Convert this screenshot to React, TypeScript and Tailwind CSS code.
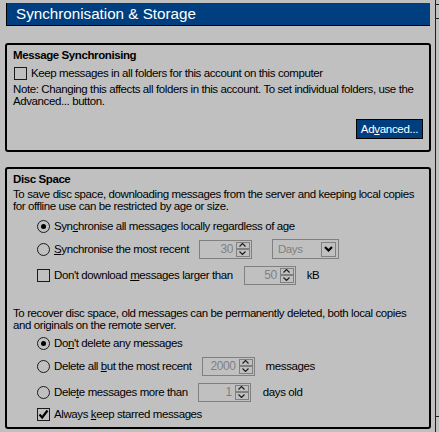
import React from 'react'

const font = { fontFamily: '"Liberation Sans", Arial, sans-serif' }

function Radio({ checked }: { checked?: boolean }) {
  return (
    <span className="w-[13px] h-[13px] rounded-full border border-[#1a1a1a] bg-[#c0c0c0] flex items-center justify-center shrink-0">
      {checked && <span className="w-[5px] h-[5px] rounded-full bg-black" />}
    </span>
  )
}

function Check({ checked }: { checked?: boolean }) {
  return (
    <span className="w-[13px] h-[13px] border border-[#1a1a1a] flex items-center justify-center shrink-0">
      {checked && (
        <svg width="11" height="11" viewBox="0 0 11 11">
          <path d="M1.5 5.5 L4.2 8.5 L9.5 1.5" stroke="black" strokeWidth="2.2" fill="none" />
        </svg>
      )}
    </span>
  )
}

function SpinArrow({ up }: { up?: boolean }) {
  return (
    <span className="flex-1 border border-[#808080] flex items-center justify-center">
      <svg width="7" height="4" viewBox="0 0 7 4">
        <path d={up ? 'M0.5 3.5 L3.5 0.5 L6.5 3.5' : 'M0.5 0.5 L3.5 3.5 L6.5 0.5'} stroke="#202020" strokeWidth="1.2" fill="none" />
      </svg>
    </span>
  )
}

function Spin({ value, className }: { value: string; className: string }) {
  return (
    <div className={`flex items-stretch h-[19px] border border-[#808080] p-[1px] shrink-0 ${className}`}>
      <span className="flex-1 flex items-center justify-end pr-[3px] text-[#808080] text-[12px]">{value}</span>
      <div className="w-[14px] flex flex-col">
        <SpinArrow up />
        <SpinArrow />
      </div>
    </div>
  )
}

function GroupBox({ title, className, children }: { title: string; className: string; children: React.ReactNode }) {
  return (
    <div className={`w-[426px] border-2 border-black rounded-[3px] px-[6px] pt-[4px] ${className}`}>
      <div className="text-[11.5px] font-bold leading-[12px] text-black">{title}</div>
      {children}
    </div>
  )
}

export default function App() {
  return (
    <div style={font} className="w-[439px] h-[432px] bg-[#c0c0c0] overflow-hidden flex text-black text-[11.5px] tracking-[-0.4px] leading-[12px]">
      <div className="w-[431px] pl-[5px] flex flex-col">
        <div className="ml-[1px] mt-[3px] w-[424px] h-[23px] bg-[#003f7f] border-l border-b border-black flex items-center px-[9px]">
          <span className="text-white text-[15.2px] tracking-[0px] leading-none">Synchronisation &amp; Storage</span>
        </div>

        <GroupBox title="Message Synchronising" className="mt-[17px] h-[109px]">
          <div className="flex items-center gap-[4px] mt-[6px] ml-[1px] h-[12px]">
            <Check />
            <span>Keep messages in all folders for this account on this computer</span>
          </div>
          <p className="mt-[4px] pr-[4px]">
            Note: Changing this affects all folders in this account. To set individual folders, use the Advanced... button.
          </p>
          <div className="flex justify-end mt-[12px]">
            <button className="w-[67px] h-[20px] bg-[#003f7f] border border-black text-white text-[11.5px] tracking-[-0.3px] flex items-center justify-center">
              Ad<u>v</u>anced...
            </button>
          </div>
        </GroupBox>

        <GroupBox title="Disc Space" className="mt-[15px] h-[262px]">
          <p className="mt-[3px] pr-[4px]">
            To save disc space, downloading messages from the server and keeping local copies for offline use can be restricted by age or size.
          </p>
          <div className="pl-[24px] mt-[8px] flex flex-col">
            <div className="flex items-center gap-[4px] h-[12px]">
              <Radio checked />
              <span>Syn<u>c</u>hronise all messages locally regardless of age</span>
            </div>
            <div className="flex items-center h-[20px] mt-[7px]">
              <Radio />
              <span className="ml-[4px]"><u>S</u>ynchronise the most recent</span>
              <Spin value="30" className="w-[53px] ml-[10px]" />
              <div className="ml-[20px] w-[67px] h-[20px] border border-[#808080] flex items-center justify-between pl-[5px] pr-[2px]">
                <span className="text-[#808080]">Days</span>
                <span className="w-[15px] h-[15px] border border-[#808080] flex items-center justify-center">
                  <svg width="9" height="6" viewBox="0 0 9 6">
                    <path d="M1 1 L4.5 4.5 L8 1" stroke="black" strokeWidth="2.2" fill="none" />
                  </svg>
                </span>
              </div>
            </div>
            <div className="flex items-center h-[20px] mt-[6px]">
              <Check />
              <span className="ml-[4px]">Don't download <u>m</u>essages larger than</span>
              <Spin value="50" className="w-[52px] ml-[11px]" />
              <span className="ml-[11px]">kB</span>
            </div>
          </div>
          <p className="mt-[22px] pr-[4px]">
            To recover disc space, old messages can be permanently deleted, both local copies and originals on the remote server.
          </p>
          <div className="pl-[24px] mt-[6px] flex flex-col">
            <div className="flex items-center gap-[4px] h-[12px]">
              <Radio checked />
              <span>Do<u>n</u>'t delete any messages</span>
            </div>
            <div className="flex items-center h-[20px] mt-[7px]">
              <Radio />
              <span className="ml-[4px]">Delete all <u>b</u>ut the most recent</span>
              <Spin value="2000" className="w-[53px] ml-[10px]" />
              <span className="ml-[11px]">messages</span>
            </div>
            <div className="flex items-center h-[20px] mt-[6px]">
              <Radio />
              <span className="ml-[4px]">Dele<u>t</u>e messages more than</span>
              <Spin value="1" className="w-[53px] ml-[10px]" />
              <span className="ml-[12px]">days old</span>
            </div>
            <div className="flex items-center gap-[4px] h-[12px] mt-[6px]">
              <Check checked />
              <span>Always <u>k</u>eep starred messages</span>
            </div>
          </div>
        </GroupBox>
      </div>
      <div className="ml-[4px] flex-1 border-l border-[#202020] flex flex-col">
        <div className="mt-[4px] h-[15px] border-t border-b border-[#202020]" />
        <div className="flex-1" />
        <div className="h-[16px] border-t border-[#202020]" />
      </div>
    </div>
  )
}
